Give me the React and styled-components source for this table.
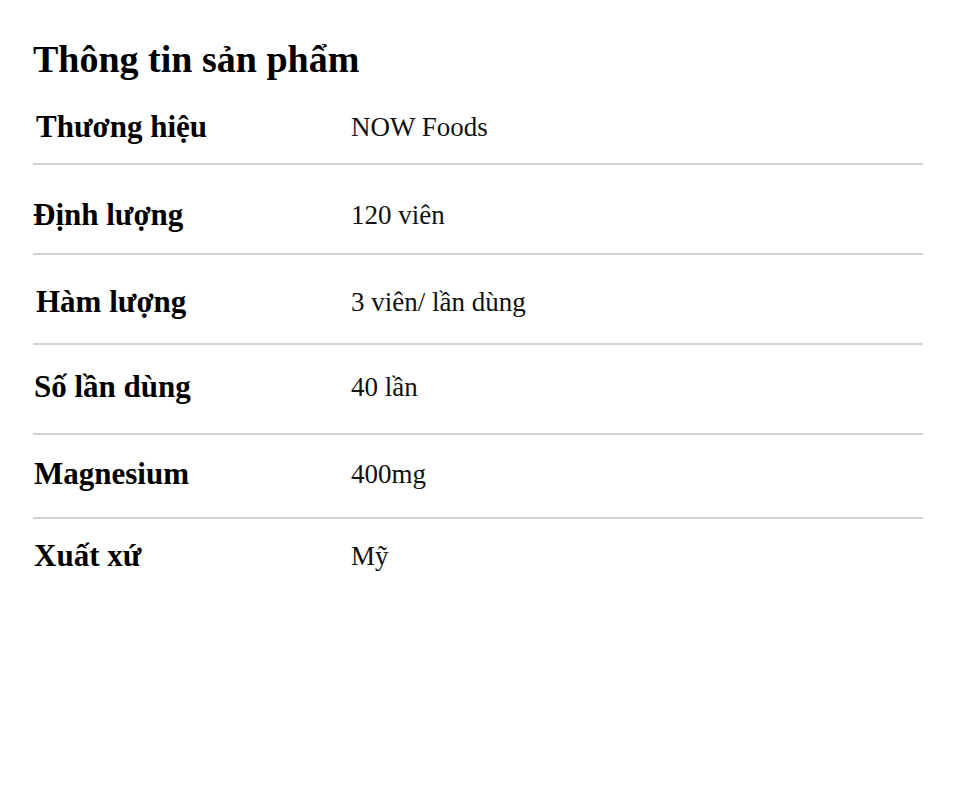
import React from 'react';
import styled, { createGlobalStyle } from 'styled-components';

const GlobalStyle = createGlobalStyle`
  body {
    margin: 0;
    background: #fff;
    font-family: "Liberation Serif", "Times New Roman", serif;
    color: #111;
  }
`;

const specs = [
  { label: 'Thương hiệu', value: 'NOW Foods', height: 82, pt: 8, indent: 3 },
  { label: 'Định lượng', value: '120 viên', height: 90, pt: 12 },
  { label: 'Hàm lượng', value: '3 viên/ lần dùng', height: 90, pt: 6, indent: 3 },
  { label: 'Số lần dùng', value: '40 lần', height: 90, pb: 4, indent: 1 },
  { label: 'Magnesium', value: '400mg', height: 84, pb: 4, indent: 1 },
  { label: 'Xuất xứ', value: 'Mỹ', height: 70, pt: 4, indent: 1, last: true },
];

export default function App() {
  return (
    <Page>
      <GlobalStyle />
      <Title>Thông tin sản phẩm</Title>
      <SpecTable>
        {specs.map((spec) => (
          <SpecRow
            key={spec.label}
            height={spec.height}
            pt={spec.pt}
            pb={spec.pb}
            last={spec.last}
          >
            <SpecLabel indent={spec.indent}>{spec.label}</SpecLabel>
            <SpecValue>{spec.value}</SpecValue>
          </SpecRow>
        ))}
      </SpecTable>
    </Page>
  );
}

const Page = styled.div`
  width: 890px;
  padding: 37px 0 0 33px;
`;

const Title = styled.h2`
  margin: 0 0 2px;
  font-size: 38px;
  line-height: 44px;
  font-weight: bold;
  color: #000;
`;

const SpecTable = styled.div`
  display: flex;
  flex-direction: column;
`;

const SpecRow = styled.div`
  box-sizing: border-box;
  height: ${({ height }) => height}px;
  padding-top: ${({ pt }) => pt || 0}px;
  padding-bottom: ${({ pb }) => pb || 0}px;
  display: grid;
  grid-template-columns: 318px 1fr;
  align-items: center;
  border-bottom: ${({ last }) => (last ? 'none' : '2px solid #d2d2d2')};
`;

const SpecLabel = styled.span`
  padding-left: ${({ indent }) => indent || 0}px;
  font-size: 31px;
  font-weight: bold;
  color: #000;
`;

const SpecValue = styled.span`
  font-size: 27px;
  color: #111;
`;
